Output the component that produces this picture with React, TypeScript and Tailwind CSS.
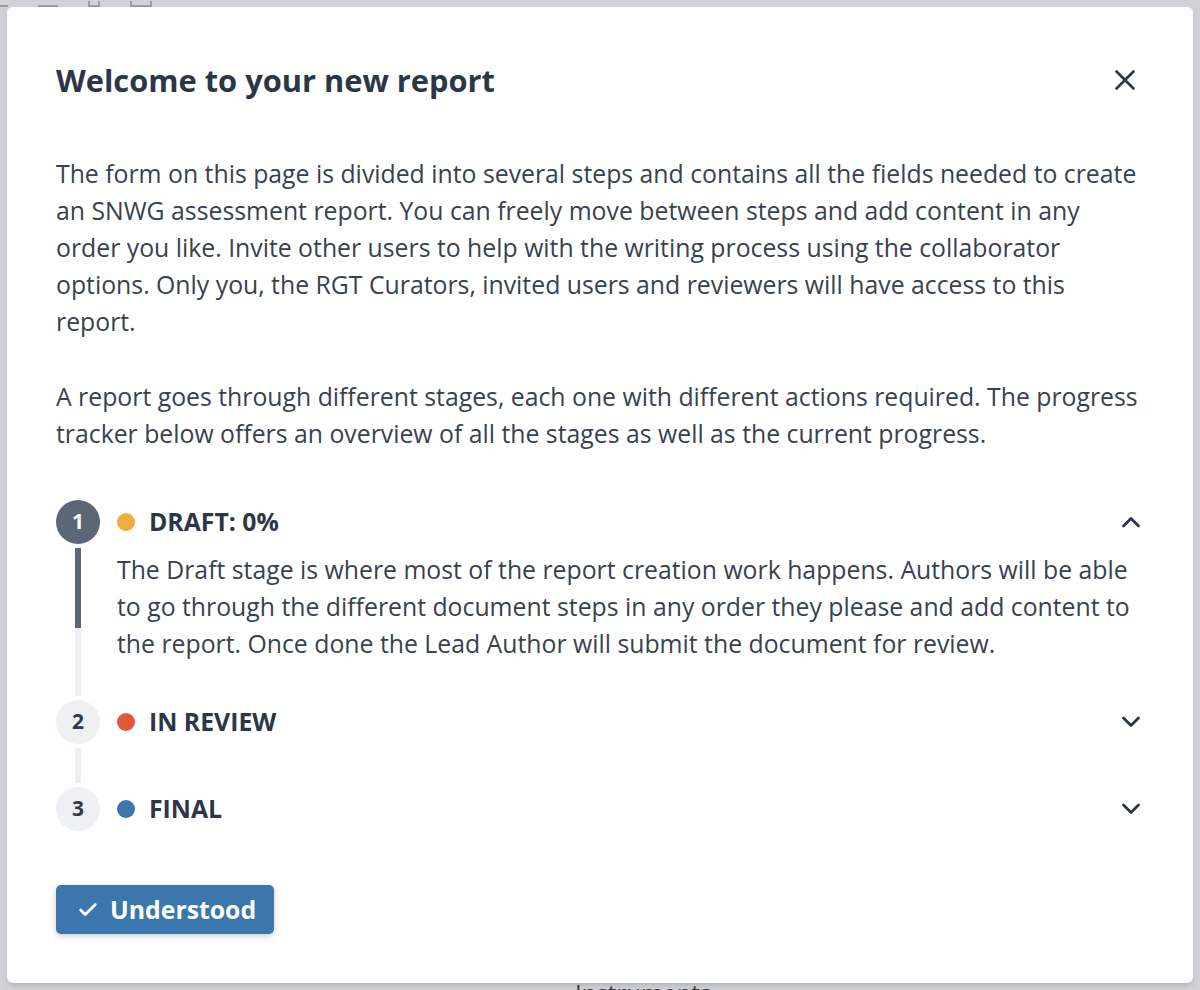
import { Check } from "lucide-react";

const font = { fontFamily: '"Open Sans", "Noto Sans", sans-serif' };

type Step = {
  n: number;
  label: string;
  dot: string;
  active?: boolean;
  open?: boolean;
  text?: string;
  last?: boolean;
};

const steps: Step[] = [
  {
    n: 1,
    label: "DRAFT: 0%",
    dot: "bg-[#f1ad3b]",
    active: true,
    open: true,
    text: "The Draft stage is where most of the report creation work happens. Authors will be able to go through the different document steps in any order they please and add content to the report. Once done the Lead Author will submit the document for review.",
  },
  { n: 2, label: "IN REVIEW", dot: "bg-[#e5553a]" },
  { n: 3, label: "FINAL", dot: "bg-[#3d76ad]", last: true },
];

function Chevron({ up }: { up?: boolean }) {
  return (
    <svg width="20" height="12" viewBox="0 0 20 12" fill="none" stroke="currentColor" strokeWidth="2.8" strokeLinecap="round" strokeLinejoin="round">
      <path d={up ? "M2.5 10L10 2.5l7.5 7.5" : "M2.5 2L10 9.5 17.5 2"} />
    </svg>
  );
}

function StepRow({ step }: { step: Step }) {
  return (
    <div className="flex gap-[17px]">
      {/* Left rail */}
      <div className="flex w-[44px] shrink-0 flex-col items-center">
        <div
          className={
            step.active
              ? "flex h-[44px] w-[44px] items-center justify-center rounded-full bg-[#5b6777] text-[21px] font-bold text-white"
              : "flex h-[44px] w-[44px] items-center justify-center rounded-full bg-[#eef0f3] text-[21px] font-bold text-[#2f3b4b]"
          }
        >
          {step.n}
        </div>
        {!step.last && (
          <div className="my-[4px] flex w-[6px] flex-1 flex-col">
            {step.active && <div className="h-[80px] bg-[#5b6777]" />}
            <div className="flex-1 bg-[#eceef1]" />
          </div>
        )}
      </div>

      {/* Content */}
      <div className={step.last ? "flex-1" : step.open ? "flex-1 pb-[38px]" : "flex-1 pb-[43px]"}>
        <div className="flex h-[44px] items-center">
          <span className={`h-[18px] w-[18px] rounded-full ${step.dot}`} />
          <span className="ml-[14px] text-[24.8px] font-bold text-[#2b3747]">{step.label}</span>
          <span className="ml-auto mr-[3px] flex text-[#2b3747]">
            <Chevron up={step.open} />
          </span>
        </div>
        {step.open && (
          <p className="mt-[7px] pr-[6px] text-[24.8px] leading-[37px] text-[#38424f]">{step.text}</p>
        )}
      </div>
    </div>
  );
}

export default function App() {
  return (
    <div className="relative h-[990px] w-[1200px] overflow-hidden bg-[#d0d2d5]" style={font}>
      {/* Page behind the overlay */}
      <div className="flex h-[7px] items-end gap-[30px]">
        <div className="h-[2px] w-[8px] bg-[#9a9ea4]" />
        <div className="h-[2px] w-[20px] bg-[#9a9ea4]" />
        <div className="h-[6px] w-[12px] border-x-2 border-b-2 border-[#9a9ea4]" />
        <div className="h-[6px] w-[22px] border-x-2 border-b-2 border-[#9a9ea4]" />
      </div>
      <div className="absolute left-[575px] top-[975px] text-[24px] text-[#3a3f46]">Instruments</div>

      {/* Modal */}
      <div className="absolute inset-[7px] rounded-[6px] bg-white px-[49px] pt-[55px] shadow-md">
        <div className="flex items-center justify-between">
          <h1 className="text-[30.8px] font-bold leading-[36px] text-[#2b3747]">Welcome to your new report</h1>
          <button className="mr-[7px] text-[#2b3747]" aria-label="Close">
            <svg width="24" height="24" viewBox="0 0 24 24" fill="none" stroke="currentColor" strokeWidth="2.6" strokeLinecap="round">
              <path d="M3.5 3.5l17 17M20.5 3.5l-17 17" />
            </svg>
          </button>
        </div>

        <div className="mt-[57px] text-[24.8px] leading-[37px] text-[#38424f]">
          <p>
            The form on this page is divided into several steps and contains all the fields needed to create an SNWG
            assessment report. You can freely move between steps and add content in any order you like. Invite other
            users to help with the writing process using the collaborator options. Only you, the RGT Curators, invited
            users and reviewers will have access to this report.
          </p>
          <p className="mt-[38px]">
            A report goes through different stages, each one with different actions required. The progress tracker
            below offers an overview of all the stages as well as the current progress.
          </p>
        </div>

        <div className="mt-[48px]">
          {steps.map((s) => (
            <StepRow key={s.n} step={s} />
          ))}
        </div>

        <button className="mt-[54px] flex h-[49px] items-center gap-[11px] rounded-[5px] bg-[#3b76ad] pl-[21px] pr-[18px] text-[24.8px] font-bold text-white shadow-[0_2px_6px_rgba(0,0,0,0.2)]">
          <Check size={22} strokeWidth={3} />
          Understood
        </button>
      </div>
    </div>
  );
}
